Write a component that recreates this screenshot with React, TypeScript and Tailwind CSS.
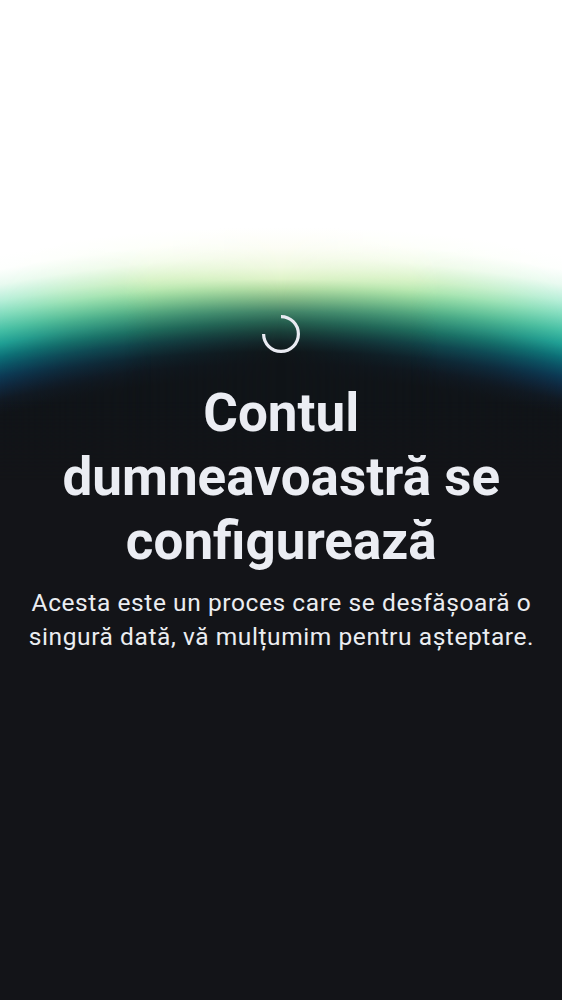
const CENTER_GLOW =
  "bg-[radial-gradient(circle_at_281px_1702px,#101418_1338px,#101619_1350px,#142528_1360px,#1a3f39_1370px,#276050_1380px,#438468_1390px,#82b887_1403px,#b4dca4_1413px,#dff3c9_1423px,#f0f9e1_1435px,#fcfdf5_1454px,#ffffff_1475px)]";
const MIDDLE_GLOW =
  "bg-[radial-gradient(circle_at_281px_1701px,#101418_1322px,#101820_1337px,#0f2630_1350px,#12454a_1364px,#1f7060_1377px,#358a70_1385px,#50a880_1394px,#72c290_1402px,#95d8a0_1410px,#b5e8b0_1417px,#d5f2c5_1427px,#f3fceb_1444px,#fdfffa_1460px,#ffffff_1475px)]";
const EDGE_GLOW =
  "bg-[radial-gradient(circle_at_281px_1702px,#101418_1317px,#111a24_1332px,#0f2940_1345px,#0c3a55_1355px,#0b5467_1365px,#0c7078_1374px,#1f9f95_1387px,#45bfa5_1400px,#82dcbf_1416px,#b5eed8_1429px,#e8faf0_1445px,#fdfffd_1460px,#ffffff_1474px)]";

function Spinner() {
  return (
    <svg className="block h-10 w-10" viewBox="0 0 40 40" fill="none">
      <path d="M20 2.6A17.4 17.4 0 1 1 2.6 20" stroke="#e9ebf2" strokeWidth="3.2" />
    </svg>
  );
}

export default function App() {
  return (
    <main className="relative h-[1000px] w-[562px] overflow-hidden bg-[#131418] font-['Roboto',sans-serif]">
      <div className={`absolute inset-x-0 top-0 h-[480px] [mask-image:linear-gradient(#000_400px,transparent)] ${CENTER_GLOW}`}>
        <div
          className={`h-full w-full [mask-image:linear-gradient(90deg,#000_22%,rgba(0,0,0,0.4)_38%,rgba(0,0,0,0.08)_47%,transparent_50%,rgba(0,0,0,0.08)_53%,rgba(0,0,0,0.4)_62%,#000_78%)] ${MIDDLE_GLOW}`}
        >
          <div
            className={`h-full w-full [mask-image:linear-gradient(90deg,#000,rgba(0,0,0,0.45)_12%,transparent_27%,transparent_73%,rgba(0,0,0,0.45)_88%,#000)] ${EDGE_GLOW}`}
          />
        </div>
      </div>
      <div className="relative flex flex-col items-center pt-[314px] text-center">
        <Spinner />
        <h1 className="mt-[27px] pl-[0.5px] text-[53px] leading-[64px] font-bold text-[#ebedf3]">
          Contul
          <br />
          dumneavoastră se
          <br />
          configurează
        </h1>
        <p className="mt-[13px] pl-px text-[24.5px] leading-[34px] tracking-[0.58px] whitespace-nowrap text-[#ebedf1]">
          Acesta este un proces care se desfășoară o
          <br />
          singură dată, vă mulțumim pentru așteptare.
        </p>
      </div>
    </main>
  );
}
